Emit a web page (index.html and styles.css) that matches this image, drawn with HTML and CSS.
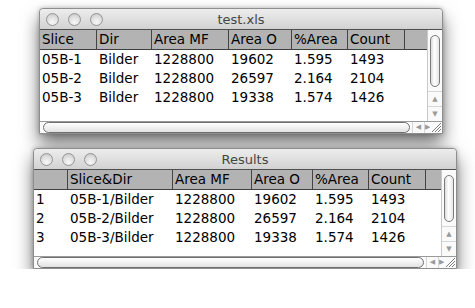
FILE: index.html
```html
<!DOCTYPE html>
<html lang="en">
<head>
    <meta charset="UTF-8">
    <meta name="viewport" content="width=device-width, initial-scale=1.0">
    <title>Results tables</title>
    <link rel="stylesheet" href="styles.css">
</head>
<body>
    <div class="desk">
        <section class="window win-test">
            <header class="titlebar">
                <span class="lights"><i></i><i></i><i></i></span>
                <span class="title">test.xls</span>
            </header>
            <div class="pane">
                <div class="table">
                    <div class="row head">
                        <span>Slice</span><span>Dir</span><span>Area MF</span><span>Area O</span><span>%Area</span><span>Count</span><span class="filler"></span>
                    </div>
                    <div class="rows">
                        <div class="row"><span>05B-1</span><span>Bilder</span><span>1228800</span><span>19602</span><span>1.595</span><span>1493</span></div>
                        <div class="row"><span>05B-2</span><span>Bilder</span><span>1228800</span><span>26597</span><span>2.164</span><span>2104</span></div>
                        <div class="row"><span>05B-3</span><span>Bilder</span><span>1228800</span><span>19338</span><span>1.574</span><span>1426</span></div>
                    </div>
                </div>
                <div class="vscroll">
                    <div class="track"><div class="thumb"></div></div>
                    <div class="arrow">&#9650;</div>
                    <div class="arrow">&#9660;</div>
                </div>
            </div>
            <div class="hscroll">
                <div class="track"><div class="thumb"></div></div>
                <div class="arrow left">&#9664;</div>
                <div class="arrow right">&#9654;</div>
                <div class="grip">
                    <svg width="12" height="11" viewBox="0 0 12 11"><path d="M11 1 L2 10 M11 4 L5 10 M11 7 L8 10" stroke="#7d7d7d" stroke-width="1" fill="none"/></svg>
                </div>
            </div>
        </section>

        <section class="window win-results">
            <header class="titlebar">
                <span class="lights"><i></i><i></i><i></i></span>
                <span class="title">Results</span>
            </header>
            <div class="pane">
                <div class="table">
                    <div class="row head">
                        <span></span><span>Slice&amp;Dir</span><span>Area MF</span><span>Area O</span><span>%Area</span><span>Count</span><span class="filler"></span>
                    </div>
                    <div class="rows">
                        <div class="row"><span>1</span><span>05B-1/Bilder</span><span>1228800</span><span>19602</span><span>1.595</span><span>1493</span></div>
                        <div class="row"><span>2</span><span>05B-2/Bilder</span><span>1228800</span><span>26597</span><span>2.164</span><span>2104</span></div>
                        <div class="row"><span>3</span><span>05B-3/Bilder</span><span>1228800</span><span>19338</span><span>1.574</span><span>1426</span></div>
                    </div>
                </div>
                <div class="vscroll">
                    <div class="track"><div class="thumb"></div></div>
                    <div class="arrow">&#9650;</div>
                    <div class="arrow">&#9660;</div>
                </div>
            </div>
            <div class="hscroll">
                <div class="track"><div class="thumb"></div></div>
                <div class="arrow left">&#9664;</div>
                <div class="arrow right">&#9654;</div>
                <div class="grip">
                    <svg width="12" height="11" viewBox="0 0 12 11"><path d="M11 1 L2 10 M11 4 L5 10 M11 7 L8 10" stroke="#7d7d7d" stroke-width="1" fill="none"/></svg>
                </div>
            </div>
        </section>
    </div>
</body>
</html>
```

FILE: styles.css
```css
* {
    box-sizing: border-box;
}

body {
    margin: 0;
    background-color: white;
    font-family: "DejaVu Sans", "Liberation Sans", sans-serif;
    font-size: 13.5px;
    color: black;
    overflow: hidden;
}

.desk {
    padding-top: 8px;
}

.window {
    border: 1px solid #8e8e8e;
    border-radius: 4px 4px 0 0;
    background-color: white;
    box-shadow: 0 10px 18px rgba(0, 0, 0, 0.55), 0 0 4px rgba(0, 0, 0, 0.25);
}

.win-test {
    width: 404px;
    margin-left: 39px;
}

.win-results {
    width: 424px;
    margin-left: 33px;
    margin-top: 14px;
}

/* title bar */

.titlebar {
    height: 21px;
    display: grid;
    grid-template-columns: 1fr auto 1fr;
    align-items: center;
    background: linear-gradient(#ededed, #d2d2d2);
    border-radius: 4px 4px 0 0;
    border-bottom: 1px solid #4f4f4f;
}

.lights {
    display: flex;
    gap: 9px;
    padding-left: 6px;
}

.lights i {
    width: 13px;
    height: 13px;
    border-radius: 50%;
    border: 1px solid #959595;
    background: radial-gradient(circle at 50% 75%, #f8f8f8, #dcdcdc 60%, #bdbdbd);
}

.title {
    color: #454545;
    font-size: 13px;
    padding-top: 1px;
}

/* table */

.pane {
    display: flex;
}

.win-test .pane {
    height: 91px;
}

.win-results .pane {
    height: 86px;
}

.table {
    flex: 1;
    display: flex;
    flex-direction: column;
}

.row {
    display: grid;
    height: 19px;
    line-height: 19px;
    white-space: nowrap;
}

.win-test .row {
    grid-template-columns: 57px 55px 77px 63px 56px 57px 22px;
}

.win-results .row {
    grid-template-columns: 34px 105px 79px 61px 56px 57px 15px;
}

.row span {
    padding-left: 2px;
    overflow: hidden;
}

.row.head {
    height: 20px;
    background-color: #b3b3b3;
    border-bottom: 1px solid #3f3f3f;
}

.row.head span {
    border-right: 1px solid #444;
}

.row.head .filler {
    border-right: none;
}

.rows {
    flex: 1;
}

/* scroll bars */

.vscroll {
    width: 15px;
    display: flex;
    flex-direction: column;
    border-left: 1px solid #c9c9c9;
    background-color: #fafafa;
}

.vscroll .track {
    flex: 1;
    display: flex;
    padding: 5px 2px 4px 2px;
}

.vscroll .thumb {
    flex: 1;
    border: 1px solid #7b7b7b;
    border-radius: 6px;
    background: linear-gradient(90deg, #dcdcdc, #ffffff 45%, #e6e6e6);
}

.arrow {
    color: #9a9a9a;
    font-size: 7px;
    text-align: center;
}

.vscroll .arrow {
    height: 15px;
    line-height: 15px;
    border-top: 1px solid #d6d6d6;
}

.hscroll {
    height: 12px;
    display: flex;
    border-top: 1px solid #9a9a9a;
    background-color: #fafafa;
}

.hscroll .track {
    flex: 1;
    display: flex;
    padding: 0 2px 0 3px;
}

.hscroll .thumb {
    flex: 1;
    border: 1px solid #6f6f6f;
    border-radius: 6px;
    background: linear-gradient(#ffffff, #e2e2e2);
}

.hscroll .arrow {
    line-height: 11px;
    border-left: 1px solid #d6d6d6;
}

.hscroll .left {
    width: 12px;
}

.hscroll .right {
    width: 6px;
    overflow: hidden;
}

.grip {
    width: 12px;
    line-height: 0;
}
```
